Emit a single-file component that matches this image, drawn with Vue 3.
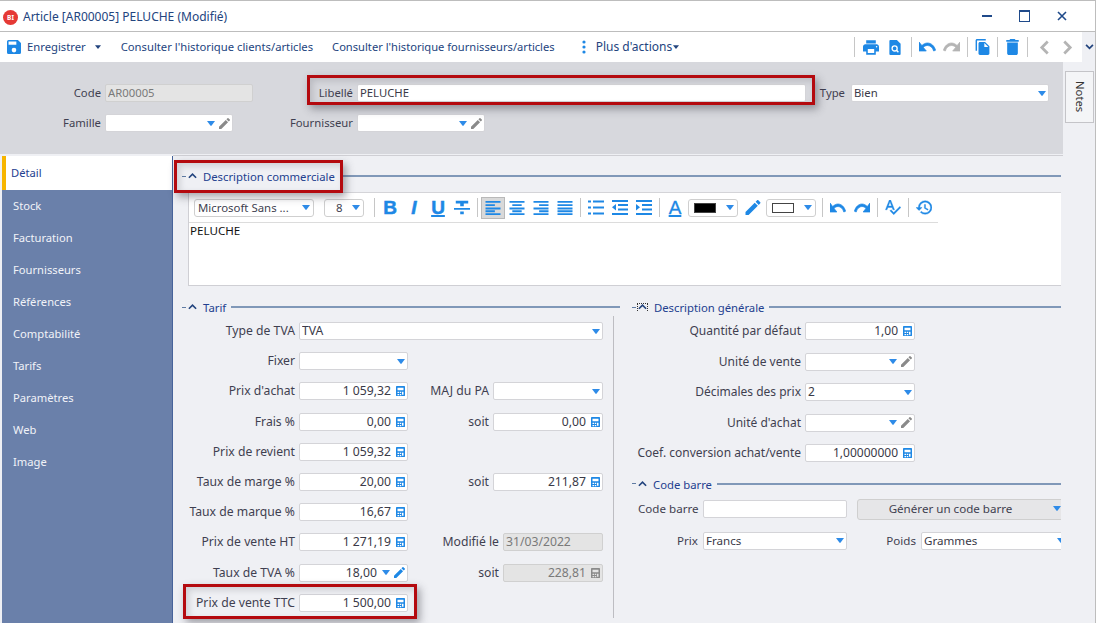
<script setup>
const tabs = ['Détail','Stock','Facturation','Fournisseurs','Références','Comptabilité','Tarifs','Paramètres','Web','Image']
const c = ['calc'], s = ['car'], p = ['car','pen']
const tarif = [
  {l:'Type de TVA',v:'TVA',i:s,k:'span3'},
  {l:'Fixer',v:'',i:s},{e:1},
  {l:"Prix d'achat",v:'1 059,32',i:c,k:'num'},{l:'MAJ du PA',v:'',i:s},
  {l:'Frais %',v:'0,00',i:c,k:'num'},{l:'soit',v:'0,00',i:c,k:'num'},
  {l:'Prix de revient',v:'1 059,32',i:c,k:'num'},{e:1},
  {l:'Taux de marge %',v:'20,00',i:c,k:'num'},{l:'soit',v:'211,87',i:c,k:'num'},
  {l:'Taux de marque %',v:'16,67',i:c,k:'num'},{e:1},
  {l:'Prix de vente HT',v:'1 271,19',i:c,k:'num'},{l:'Modifié le',v:'31/03/2022',i:[],k:'off',lk:'shift'},
  {l:'Taux de TVA %',v:'18,00',i:['car','penb'],k:'num'},{l:'soit',v:'228,81',i:c,k:'num off',lk:'shift'},
  {l:'Prix de vente TTC',v:'1 500,00',i:c,k:'num'},{e:1}
]
const gen = [
  {l:'Quantité par défaut',v:'1,00',i:c,k:'num'},
  {l:'Unité de vente',v:'',i:p},
  {l:'Décimales des prix',v:'2',i:s},
  {l:"Unité d'achat",v:'',i:p},
  {l:'Coef. conversion achat/vente',v:'1,00000000',i:c,k:'num'}
]
const alignIcons = ['al','ac','ar','aj']
</script>

<template>
  <div class="win">
    <svg class="sprite" aria-hidden="true">
      <symbol id="save" viewBox="3 3 18 18"><path d="M17 3H5a2 2 0 0 0-2 2v14a2 2 0 0 0 2 2h14a2 2 0 0 0 2-2V7l-4-4zm-5 16a3 3 0 1 1 0-6 3 3 0 0 1 0 6zm3-10H5V5h10v4z"/></symbol>
      <symbol id="print" viewBox="2 3 20 18"><path d="M19 8H5c-1.66 0-3 1.34-3 3v6h4v4h12v-4h4v-6c0-1.66-1.34-3-3-3zm-3 11H8v-5h8v5zm3-7c-.55 0-1-.45-1-1s.45-1 1-1 1 .45 1 1-.45 1-1 1zm-1-9H6v4h12V3z"/></symbol>
      <symbol id="prev" viewBox="0 0 12 16"><path d="M1 0h7l4 4v11a1 1 0 0 1-1 1H1a1 1 0 0 1-1-1V1a1 1 0 0 1 1-1z"/><circle cx="5.6" cy="9" r="2.7" fill="none" stroke="#fff" stroke-width="1.4"/><path d="M7.600 11l2 2" stroke="#fff" stroke-width="1.5"/></symbol>
      <symbol id="undo" viewBox="2 7 21 10" preserveAspectRatio="none"><path d="M12.5 8c-2.65 0-5.05.99-6.9 2.6L2 7v9h9l-3.62-3.62c1.39-1.16 3.16-1.88 5.12-1.88 3.54 0 6.55 2.31 7.6 5.5l2.37-.78C21.08 11.03 17.15 8 12.5 8z" stroke="currentColor" stroke-width=".8"/></symbol>
      <symbol id="redo" viewBox="1 7 21 10" preserveAspectRatio="none"><path d="M18.4 10.6C16.55 8.99 14.15 8 11.5 8c-4.65 0-8.58 3.03-9.96 7.22L3.9 16c1.05-3.19 4.05-5.5 7.6-5.5 1.95 0 3.73.72 5.12 1.88L13 16h9V7l-3.6 3.6z" stroke="currentColor" stroke-width=".8"/></symbol>
      <symbol id="copy" viewBox="2 1 19 22"><path d="M16 1H4c-1.1 0-2 .9-2 2v14h2V3h12V1zm-1 4l6 6v10c0 1.1-.9 2-2 2H7.99C6.89 23 6 22.1 6 21l.01-14c0-1.1.89-2 1.99-2h7zm-1 7h5.5L14 6.5V12z"/></symbol>
      <symbol id="trash" viewBox="5 3 14 18"><path d="M6 19c0 1.1.9 2 2 2h8c1.100 0 2-.9 2-2V7H6v12zM19 4h-3.5l-1-1h-5l-1 1H5v2h14V4z"/></symbol>
      <symbol id="pen" viewBox="3 3 18 18"><path d="M3 17.25V21h3.75L17.81 9.94l-3.75-3.75L3 17.25zM20.71 7.04c.39-.39.39-1.02 0-1.41l-2.34-2.34c-.39-.39-1.02-.39-1.41 0l-1.83 1.83 3.75 3.75 1.83-1.83z"/></symbol>
      <symbol id="penb" viewBox="3 3 18 18"><path d="M3 17.25V21h3.75L17.81 9.94l-3.75-3.75L3 17.25zM20.71 7.04c.39-.39.39-1.02 0-1.41l-2.34-2.34c-.39-.39-1.02-.39-1.41 0l-1.83 1.83 3.75 3.75 1.83-1.83z"/></symbol>
      <symbol id="hist" viewBox="1 3 21 18"><path d="M13 3a9 9 0 0 0-9 9H1l3.89 3.89.07.14L9 12H6c0-3.87 3.13-7 7-7s7 3.13 7 7-3.13 7-7 7c-1.93 0-3.68-.79-4.94-2.06l-1.42 1.42A8.954 8.954 0 0 0 13 21a9 9 0 0 0 0-18zm-1 5v5l4.28 2.54.72-1.21-3.5-2.08V8H12z" stroke="currentColor" stroke-width=".5"/></symbol>
      <symbol id="spell" viewBox="2 3 21 20"><path d="M12.45 16h2.09L9.43 3H7.57L2.46 16h2.09l1.12-3h5.64l1.14 3zm-6.02-5L8.5 5.48 10.57 11H6.43zm15.16.59l-8.09 8.09L9.83 16l-1.41 1.41 5.09 5.09L23 13l-1.41-1.41z" stroke="currentColor" stroke-width=".5"/></symbol>
      <symbol id="strike" viewBox="3 4 18 15"><path d="M10 19h4v-3h-4v3zM5 4v3h5v3h4V7h5V4H5zM3 14h18v-2H3v2z"/></symbol>
      <symbol id="calc" viewBox="0 0 12 12" preserveAspectRatio="none"><path fill-rule="evenodd" d="M1 0h10a1 1 0 0 1 1 1v10a1 1 0 0 1-1 1H1a1 1 0 0 1-1-1V1a1 1 0 0 1 1-1zM2 2v3h8V2zM2 7v1.500h2V7zm3 0v1.500h2V7zm3 0v3.500h2V7zM2 9.500V11h2V9.500zm3 0V11h2V9.500z"/></symbol>
      <symbol id="car" viewBox="0 0 8 5"><path d="M0 0h8L4.600 4.600a.8.8 0 0 1-1.200 0z"/></symbol>
      <symbol id="al" viewBox="0 0 16 16"><path d="M0 1h16v2H0zM0 4.500h10v2H0zM0 8h16v2H0zM0 11h10v2H0zM0 14h16v2H0z"/></symbol>
      <symbol id="ac" viewBox="0 0 16 16"><path d="M0 1h16v2H0zM3 4.500h10v2H3zM0 8h16v2H0zM3 11h10v2H3zM0 14h16v2H0z"/></symbol>
      <symbol id="ar" viewBox="0 0 16 16"><path d="M0 1h16v2H0zM6 4.500h10v2H6zM0 8h16v2H0zM6 11h10v2H6zM0 14h16v2H0z"/></symbol>
      <symbol id="aj" viewBox="0 0 16 16"><path d="M0 1h16v2H0zM0 4.500h16v2H0zM0 8h16v2H0zM0 11h16v2H0zM0 14h16v2H0z"/></symbol>
      <symbol id="bul" viewBox="0 0 16 14"><path d="M0 0h3v2H0zM5 0h11v2H5zM0 6h3v2H0zM5 6h11v2H5zM0 12h3v2H0zM5 12h11v2H5z"/></symbol>
      <symbol id="out" viewBox="0 0 16 15"><path d="M0 0h16v2H0zM6 4h10v2H6zM6 8.500h10v2H6zM0 13h16v2H0zM4 4v6.500L0 7.200z"/></symbol>
      <symbol id="ind" viewBox="0 0 16 15"><path d="M0 0h16v2H0zM6 4h10v2H6zM6 8.500h10v2H6zM0 13h16v2H0zM0 4v6.500L4 7.200z"/></symbol>
    </svg>

    <header class="title">
      <span class="logo">BI</span>
      <span class="title-t">Article [AR00005] PELUCHE (Modifié)</span>
      <div class="wbtns">
        <span class="w-min"></span><span class="w-max"></span>
        <svg class="w-x" viewBox="0 0 10 10"><path d="M1 1l8 8M9 1l-8 8"/></svg>
      </div>
    </header>

    <div class="tbrow">
      <nav class="tb">
        <svg class="b save"><use href="#save"/></svg>
        <span class="tb-l enr">Enregistrer</span>
        <svg class="dk"><use href="#car"/></svg>
        <span class="tb-l h1">Consulter l'historique clients/articles</span>
        <span class="tb-l h2">Consulter l'historique fournisseurs/articles</span>
        <svg class="kebab" viewBox="0 0 4 14"><circle cx="2" cy="2" r="1.6"/><circle cx="2" cy="7" r="1.6"/><circle cx="2" cy="12" r="1.6"/></svg>
        <span class="tb-l plus">Plus d'actions</span>
        <svg class="dk dk2"><use href="#car"/></svg>
        <div class="tools">
          <i class="sep"></i>
          <svg class="b print"><use href="#print"/></svg>
          <svg class="b prev"><use href="#prev"/></svg>
          <i class="sep"></i>
          <svg class="b und"><use href="#undo"/></svg>
          <svg class="g und"><use href="#redo"/></svg>
          <i class="sep"></i>
          <svg class="b cop"><use href="#copy"/></svg>
          <i class="sep"></i>
          <svg class="b tra"><use href="#trash"/></svg>
          <i class="sep"></i>
          <svg class="nav" viewBox="0 0 10 14"><path d="M8 1.500L2.500 7 8 12.500"/></svg>
          <svg class="nav" viewBox="0 0 10 14"><path d="M2 1.500L7.500 7 2 12.500"/></svg>
        </div>
      </nav>
      <svg class="more" viewBox="0 0 10 7"><path d="M1 1l4 4 4-4"/></svg>
    </div>

    <div class="mid">
      <div class="content">
        <section class="head">
          <label class="lb">Code</label>
          <div class="inp off"><span class="val">AR00005</span></div>
          <label class="lb">Libellé</label>
          <div class="inp"><span class="val">PELUCHE</span></div>
          <label class="lb ty">Type</label>
          <div class="inp"><span class="val">Bien</span><svg class="ic car"><use href="#car"/></svg></div>
          <label class="lb">Famille</label>
          <div class="inp w128"><span class="val"></span><svg class="ic car"><use href="#car"/></svg><svg class="ic pen"><use href="#pen"/></svg></div>
          <label class="lb">Fournisseur</label>
          <div class="inp w128"><span class="val"></span><svg class="ic car"><use href="#car"/></svg><svg class="ic pen"><use href="#pen"/></svg></div>
        </section>

        <div class="body">
          <aside class="side">
            <div v-for="(t,i) in tabs" :key="t" class="tab" :class="{on:i===0}">{{ t }}</div>
          </aside>

          <main class="panel">
            <div class="sec-h sh1">
              <i class="dash"></i>
              <svg class="chev" viewBox="0 0 10 6"><path d="M1 5l4-4 4 4"/></svg>
              <span class="sec-t">Description commerciale</span>
              <i class="rule"></i>
            </div>

            <div class="editor">
              <div class="etb">
                <div class="sel font"><span>Microsoft Sans ...</span><svg class="ic car"><use href="#car"/></svg></div>
                <div class="sel size"><span>8</span><svg class="ic car"><use href="#car"/></svg></div>
                <i class="sep s2 s1"></i>
                <span class="gl gb">B</span>
                <span class="gl gi">I</span>
                <span class="gl gu">U</span>
                <svg class="e16"><use href="#strike"/></svg>
                <i class="sep s2"></i>
                <span class="act"><svg class="e16"><use href="#al"/></svg></span>
                <svg v-for="a in alignIcons.slice(1)" :key="a" class="e16"><use :href="'#'+a"/></svg>
                <i class="sep s2"></i>
                <svg class="e16"><use href="#bul"/></svg>
                <svg class="e16"><use href="#out"/></svg>
                <svg class="e16"><use href="#ind"/></svg>
                <i class="sep s2"></i>
                <span class="gl ga">A</span>
                <div class="sel clr"><b class="sw k"></b><svg class="ic car"><use href="#car"/></svg></div>
                <svg class="e16 epen"><use href="#pen"/></svg>
                <div class="sel clr"><b class="sw"></b><svg class="ic car"><use href="#car"/></svg></div>
                <i class="sep s2 s3"></i>
                <svg class="e16 eu"><use href="#undo"/></svg>
                <svg class="e16 eu"><use href="#redo"/></svg>
                <i class="sep s2"></i>
                <svg class="e16"><use href="#spell"/></svg>
                <i class="sep s2"></i>
                <svg class="e16"><use href="#hist"/></svg>
              </div>
              <div class="etext">PELUCHE</div>
            </div>

            <div class="cols">
              <div class="left">
                <div class="sec-h sh2">
                  <i class="dash"></i>
                  <svg class="chev" viewBox="0 0 10 6"><path d="M1 5l4-4 4 4"/></svg>
                  <span class="sec-t">Tarif</span>
                  <i class="rule"></i>
                </div>
                <div class="tform">
                  <template v-for="(f,n) in tarif" :key="n">
                    <template v-if="f.e"><span></span><span></span></template>
                    <template v-else>
                      <label class="lb" :class="f.lk">{{ f.l }}</label>
                      <div class="inp" :class="f.k"><span class="val">{{ f.v }}</span><svg v-for="g in f.i" :key="g" class="ic" :class="g"><use :href="'#'+g"/></svg></div>
                    </template>
                  </template>
                </div>
              </div>

              <div class="right">
                <div class="sec-h sh3">
                  <i class="dash"></i>
                  <span class="focus"><svg class="chev" viewBox="0 0 10 6"><path d="M1 5l4-4 4 4"/></svg></span>
                  <span class="sec-t">Description générale</span>
                  <i class="rule"></i>
                </div>
                <div class="gform">
                  <template v-for="f in gen" :key="f.l">
                    <label class="lb">{{ f.l }}</label>
                    <div class="inp" :class="f.k"><span class="val">{{ f.v }}</span><svg v-for="g in f.i" :key="g" class="ic" :class="g"><use :href="'#'+g"/></svg></div>
                  </template>
                </div>
                <div class="sec-h sh4">
                  <i class="dash"></i>
                  <svg class="chev" viewBox="0 0 10 6"><path d="M1 5l4-4 4 4"/></svg>
                  <span class="sec-t">Code barre</span>
                  <i class="rule"></i>
                </div>
                <div class="bform">
                  <label class="lb">Code barre</label>
                  <div class="inp"><span class="val"></span></div>
                  <div class="btn"><span>Générer un code barre</span><svg class="ic car"><use href="#car"/></svg></div>
                  <label class="lb">Prix</label>
                  <div class="inp"><span class="val">Francs</span><svg class="ic car"><use href="#car"/></svg></div>
                  <label class="lb">Poids</label>
                  <div class="inp"><span class="val">Grammes</span><svg class="ic car"><use href="#car"/></svg></div>
                </div>
              </div>
            </div>
          </main>
        </div>
      </div>

      <aside class="rail"><div class="notes"><span>Notes</span></div></aside>
    </div>

    <i class="mark m1"></i>
    <i class="mark m2"></i>
    <i class="mark m3"></i>
  </div>
</template>

<style scoped>
.win {
  position: relative;
  width: 1096px;
  height: 623px;
  box-sizing: border-box;
  overflow: hidden;
  display: flex;
  flex-direction: column;
  background: #eff0f4;
  border-top: 1px solid #bdbdbd;
  border-right: 1px solid #bdbdbd;
  font: 12px/16px "Noto Sans", "Liberation Sans", sans-serif;
  color: #3f3f50;
}
.sprite { position: absolute; width: 0; height: 0; }
svg { display: block; flex: none; fill: currentColor; }
i { display: block; font-style: normal; }

.title {
  height: 30px;
  flex: none;
  display: flex;
  align-items: center;
  background: #fff;
  border-bottom: 1px solid #bdbdbd;
  padding-left: 3px;
  color: #23447e;
}
.logo {
  width: 15px;
  height: 15px;
  margin-top: 2px;
  border-radius: 50%;
  background: #e53935;
  color: #fff;
  font-size: 6.5px;
  font-weight: 700;
  line-height: 15px;
  text-align: center;
}
.title-t { margin: 2px 0 0 5px; }
.wbtns { margin-left: auto; display: flex; align-items: center; margin-right: 28px; }
.w-min { width: 10px; height: 2px; background: #1f4a8a; }
.w-max { width: 9px; height: 9px; margin-left: 27px; border: 1px solid #1f4a8a; border-top-width: 2px; }
.w-x { width: 10px; height: 10px; margin-left: 27px; stroke: #1f4a8a; stroke-width: 1.6; fill: none; }

.tbrow { height: 30px; flex: none; display: flex; align-items: center; }
.tb {
  width: 1082px;
  height: 100%;
  display: flex;
  align-items: center;
  background: #fff;
  padding-left: 7px;
  box-sizing: border-box;
  color: #23447e;
}
.b { color: #1e88e5; }
.g { color: #b4b4b4; }
.save { width: 14px; height: 14px; }
.tb-l { white-space: nowrap; font-size: 11.25px; }
.enr { margin-left: 6px; }
.dk { width: 6px; height: 4px; margin-left: 9px; color: #23447e; }
.h1 { margin-left: 20px; }
.h2 { margin-left: 19px; font-size: 11.15px; }
.kebab { width: 4px; height: 14px; margin-left: 27px; color: #1e88e5; }
.plus { margin-left: 10px; font-size: 12px; }
.dk2 { margin-left: 1px; }
.tools { margin-left: auto; display: flex; align-items: center; gap: 7px; padding-right: 9px; }
.sep { width: 1px; height: 20px; background: #c6c6c6; }
.print { width: 16px; height: 15px; margin-left: 1px; }
.prev { width: 12px; height: 15px; margin: 0 3px; }
.und { width: 17px; height: 10px; }
.cop { width: 15px; height: 16px; }
.tra { width: 13px; height: 16px; margin: 0 1px; }
.nav { width: 11px; height: 15px; fill: none; stroke: #b4b4b4; stroke-width: 2.6; margin-left: 4px; }
.nav + .nav { margin-left: 5px; }
.more { width: 9px; height: 6px; margin-left: 3px; fill: none; stroke: #23447e; stroke-width: 2; }

.mid { flex: 1; display: flex; min-height: 0; }
.content { width: 1063px; display: flex; flex-direction: column; flex: none; }

.head {
  height: 92px;
  flex: none;
  box-sizing: border-box;
  background: #d7d8dd;
  padding-top: 22px;
  display: grid;
  grid-template-columns: 100px 148px 96px 449px 37px 198px;
  grid-template-rows: 18px 18px;
  column-gap: 4px;
  row-gap: 12px;
  align-content: start;
  font-size: 11.3px;
  padding-left: 1px;
}
.lb { text-align: right; white-space: nowrap; line-height: 18px; }
.ty { margin-right: 2px; }
.inp {
  box-sizing: border-box;
  height: 18px;
  background: #fff;
  border: 1px solid #d4d4d8;
  border-radius: 2px;
  display: flex;
  align-items: center;
  padding: 0 2px;
  min-width: 0;
  color: #3a3a48;
}
.val { flex: 1; white-space: nowrap; overflow: hidden; line-height: 16px; }
.num .val { text-align: right; padding-right: 5px; }
.off { background: #e4e4e4; border-color: #d0d0d0; }
.off .val { color: #7a7a7a; }
.w128 { width: 128px; }
.ic { flex: none; }
.ic.car { width: 8px; height: 5px; color: #2e8be8; }
.ic.pen { width: 11px; height: 11px; margin-left: 4px; color: #8a8a8a; }
.ic.penb { width: 11px; height: 11px; margin-left: 4px; color: #1e88e5; }
.ic.calc { width: 9px; height: 10px; color: #1e88e5; }
.off .ic.calc { color: #8a8a8a; }

.body { flex: 1; display: flex; min-height: 0; border-top: 1px solid #eff0f4; }
.side {
  width: 170px;
  flex: none;
  margin: 1px 0 0 2px;
  background: #6a80aa;
  border-right: 1px solid #47639a;
  font-size: 11.2px;
}
.tab { height: 32px; line-height: 32px; padding-left: 11px; color: #f1f3f8; }
.tab.on {
  height: 34px;
  line-height: 34px;
  background: #fff;
  border-left: 4px solid #f7b500;
  padding-left: 5px;
  color: #23408f;
}

.panel { flex: 1; min-width: 0; border-top: 1px solid #cfcfd4; padding-top: 12px; box-sizing: border-box; overflow: hidden; }
.sec-h { display: flex; align-items: center; height: 16px; color: #23408f; font-size: 11.3px; }
.dash { width: 4px; height: 1px; background: #5f7ba3; flex: none; }
.chev { width: 9px; height: 6px; margin-left: 2px; fill: none; stroke: #23447e; stroke-width: 1.8; }
.sec-t { margin-left: 6px; white-space: nowrap; padding-top: 2px; }
.rule { flex: 1; height: 2px; background: #8098b8; margin-left: 5px; }
.sh1 { margin: 0 2px 8px 9px; }
.sh2 { margin: 0 0 0 9px; }
.sh3 { margin-left: 12px; }
.sh4 { margin: 7px 0 0 12px; }
.focus { border: 1px dotted #333; border-bottom: 0; height: 7px; margin-left: 1px; display: block; }
.focus .chev { margin: 0; }

.editor {
  margin: 0 2px 0 15px;
  height: 94px;
  box-sizing: border-box;
  background: #fff;
  border-top: 1px solid #d4d4d8;
  border-bottom: 1px solid #cfcfd4;
  border-left: 1px solid #cfcfd4;
}
.etb {
  width: 749px;
  height: 30px;
  box-sizing: border-box;
  border-bottom: 1px solid #dcdcdc;
  display: flex;
  align-items: center;
  padding-left: 5px;
  gap: 8px;
  color: #1e88e5;
}
.sel {
  box-sizing: border-box;
  height: 18px;
  border: 1px solid #cfcfcf;
  border-radius: 3px;
  display: flex;
  align-items: center;
  justify-content: space-between;
  padding: 0 3px;
  color: #3f3f50;
  background: #fff;
  flex: none;
  font-size: 11.4px;
}
.font { width: 120px; white-space: nowrap; }
.size { width: 40px; margin-left: 2px; padding-left: 11px; }
.clr { width: 50px; margin-left: -3px; padding-left: 5px; }
.sw { width: 22px; height: 10px; border: 1px solid #444; box-sizing: border-box; }
.sw.k { background: #000; }
.s2 { height: 19px; margin: 0 -1px; }
.s1 { margin-left: 2px; }
.s3 { margin-left: -2px; }
.gl { width: 16px; text-align: center; font-weight: 700; font-size: 19px; line-height: 20px; flex: none; -webkit-text-stroke: .5px currentColor; }
.gb { font-family: "Liberation Sans", sans-serif; }
.gi { font-family: "Liberation Sans", sans-serif; font-style: italic; }
.gu { font-family: "Liberation Sans", sans-serif; text-decoration: underline; text-decoration-thickness: 2px; text-underline-offset: 1px; }
.ga { font-family: "Liberation Sans", sans-serif; text-decoration: underline; text-decoration-thickness: 2px; text-underline-offset: 1px; font-weight: 400; -webkit-text-stroke: .3px currentColor; }
.e16 { width: 16px; height: 15px; }
.eu { height: 10px; }
.epen { margin-left: -1px; }
.act {
  width: 24px;
  height: 22px;
  margin: 0 -4px;
  display: flex;
  align-items: center;
  justify-content: center;
  background: #d9d9d9;
  border: 1px solid #b9b9b9;
  box-sizing: border-box;
}
.etext { padding: 0 1px; color: #111; line-height: 16px; font-size: 11.6px; }

.cols { display: flex; margin-top: 13px; }
.left { width: 447px; flex: none; }
.right { flex: 1; margin-right: 2px; overflow: hidden; }

.tform {
  width: 441px;
  box-sizing: border-box;
  margin-top: 1px;
  padding-right: 10px;
  border-right: 1px solid #bdbdc2;
  display: grid;
  grid-template-columns: 126px 109px 85px 110px;
  column-gap: 0;
  grid-auto-rows: 30.2px;
  align-items: center;
  font-size: 12.2px;
}
.tform .lb { padding-right: 4px; }
.tform .span3 { grid-column: span 3; }
.tform .lb.shift { margin-right: -10px; }
.tform .inp.off { margin-left: 10px; }

.gform {
  margin: 1px 0 0 12px;
  width: 283px;
  display: grid;
  grid-template-columns: 169px 110px;
  column-gap: 4px;
  grid-auto-rows: 30.5px;
  align-items: center;
}

.bform {
  margin: 2px 0 0 12px;
  width: 460px;
  display: grid;
  grid-template-columns: 66px 144px 64px 147px;
  column-gap: 5px;
  grid-auto-rows: 31.5px;
  align-items: center;
  font-size: 11.6px;
}
.bform .lb:first-child { margin-left: 6px; text-align: left; }
.btn {
  grid-column: 3 / span 2;
  margin-left: 5px;
  height: 21px;
  box-sizing: border-box;
  display: flex;
  align-items: center;
  position: relative;
  justify-content: center;
  background: #e6e6e8;
  border: 1px solid #cfcfcf;
  border-radius: 3px;
  padding-right: 24px;
}
.btn .car { position: absolute; right: 6px; top: 6px; }

.rail { flex: 1; padding: 9px 0 0 2px; }
.notes {
  box-sizing: border-box;
  width: 29px;
  height: 52px;
  background: #f4f5f7;
  border: 1px solid #c4c4c8;
  display: flex;
  align-items: center;
  justify-content: center;
}
.notes span { writing-mode: vertical-rl; color: #333; font-size: 11.3px; }

.mark {
  position: absolute;
  box-sizing: border-box;
  border: 3px solid #b40a0f;
  box-shadow: 3px 4px 8px rgba(60, 60, 70, .45), inset 3px 3px 6px rgba(60, 60, 70, .18);
  pointer-events: none;
}
.m1 { left: 307px; top: 74px; width: 508px; height: 30px; }
.m2 { left: 174px; top: 159px; width: 169px; height: 33px; }
.m3 { left: 183px; top: 583px; width: 234px; height: 35px; }
</style>
